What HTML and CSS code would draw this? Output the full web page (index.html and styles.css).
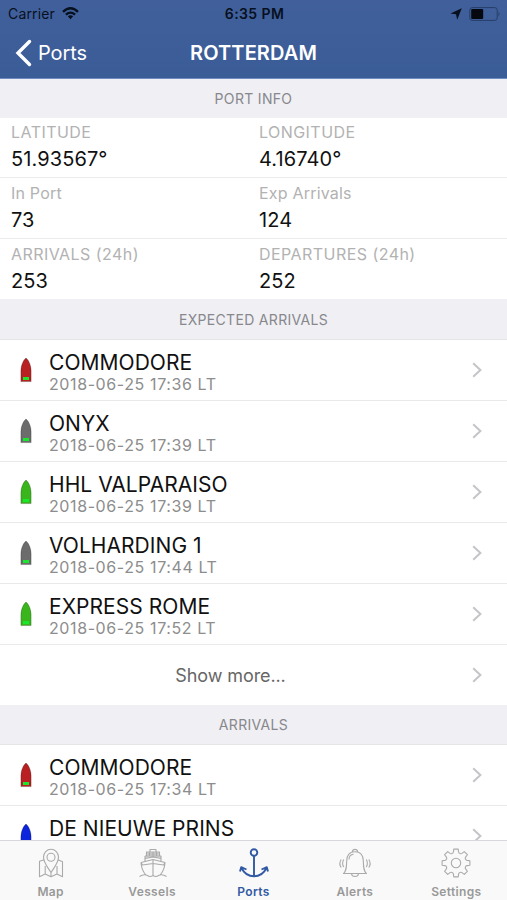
FILE: index.html
```html
<!DOCTYPE html>
<html lang="en">
<head>
<meta charset="utf-8">
<title>Rotterdam</title>
<link rel="stylesheet" href="styles.css">
</head>
<body>
<svg class="defs" aria-hidden="true">
  <defs>
    <symbol id="ship" viewBox="0 0 12 26">
      <path d="M.9 24.6V14C.9 8.500 3 3.500 6 1 9 3.500 11.100 8.500 11.100 14V24.600Z" fill="currentColor" stroke="#000" stroke-opacity=".28" stroke-width=".8"/>
      <rect x="3" y="20" width="6" height="3" fill="#18e72b"/>
    </symbol>
    <symbol id="chev" viewBox="0 0 10 16"><path d="M1.200 1.200 8.400 8 1.200 14.800" fill="none" stroke="#c5c5c9" stroke-width="2"/></symbol>
    <path id="tooth" d="M-3.900-9.400Q-2.800-9.900-2.600-11L-2.200-13.900H2.200L2.600-11Q2.800-9.900 3.900-9.400"/>
  </defs>
</svg>
<div class="screen">
  <header class="top">
    <div class="status">
      <div class="side"><span class="carrier">Carrier</span>
        <svg class="wifi" width="17" height="13" viewBox="0 0 17 13"><g fill="none" stroke="#07101f" stroke-width="2.300"><path d="M1 4.800Q8.500-2.200 16 4.800"/><path d="M3.900 7.700Q8.500 3.500 13.100 7.700"/></g><path d="M5.800 9.300Q8.500 7.200 11.200 9.300L8.500 12.200Z" fill="#07101f"/></svg>
      </div>
      <span class="clock">6:35 PM</span>
      <div class="side right">
        <svg width="12" height="12" viewBox="0 0 12 12"><path d="M11.800.2 7.200 11.800 6 6.300.4 5.500Z" fill="#07101f"/></svg>
        <svg class="battery" width="32" height="14" viewBox="0 0 32 14"><rect x=".8" y=".6" width="27.400" height="12.800" rx="2.500" fill="none" stroke="#263d68"/><rect x="2.200" y="2" width="12" height="10" rx="1" fill="#05080f"/><path d="M29.500 4.500Q31.500 7 29.500 9.500Z" fill="#263d68"/></svg>
      </div>
    </div>
    <nav class="nav">
      <div class="side"><svg width="17" height="28" viewBox="0 0 17 28"><path d="M14.500 2.500 3 14 14.500 25.500" fill="none" stroke="#fff" stroke-width="3.400" stroke-linecap="round" stroke-linejoin="miter"/></svg><span class="back">Ports</span></div>
      <h1>ROTTERDAM</h1>
      <div class="side"></div>
    </nav>
  </header>
  <main>
    <h2 class="first"><span>PORT INFO</span></h2>
    <div class="info">
      <div class="cell"><span class="label">LATITUDE</span><span class="value">51.93567°</span></div>
      <div class="cell"><span class="label">LONGITUDE</span><span class="value">4.16740°</span></div>
      <div class="cell"><span class="label mixed">In Port</span><span class="value">73</span></div>
      <div class="cell"><span class="label mixed">Exp Arrivals</span><span class="value">124</span></div>
      <div class="cell last"><span class="label">ARRIVALS (24h)</span><span class="value">253</span></div>
      <div class="cell last"><span class="label">DEPARTURES (24h)</span><span class="value">252</span></div>
    </div>
    <h2 class="expected"><span>EXPECTED ARRIVALS</span></h2>
    <div class="row"><svg class="ship red"><use href="#ship"/></svg><div class="text"><span class="name">COMMODORE</span><span class="time">2018-06-25 17:36 LT</span></div><svg class="chev"><use href="#chev"/></svg></div>
    <div class="row"><svg class="ship gray"><use href="#ship"/></svg><div class="text"><span class="name">ONYX</span><span class="time">2018-06-25 17:39 LT</span></div><svg class="chev"><use href="#chev"/></svg></div>
    <div class="row"><svg class="ship green"><use href="#ship"/></svg><div class="text"><span class="name">HHL VALPARAISO</span><span class="time">2018-06-25 17:39 LT</span></div><svg class="chev"><use href="#chev"/></svg></div>
    <div class="row"><svg class="ship gray"><use href="#ship"/></svg><div class="text"><span class="name">VOLHARDING 1</span><span class="time">2018-06-25 17:44 LT</span></div><svg class="chev"><use href="#chev"/></svg></div>
    <div class="row"><svg class="ship green"><use href="#ship"/></svg><div class="text"><span class="name">EXPRESS ROME</span><span class="time">2018-06-25 17:52 LT</span></div><svg class="chev"><use href="#chev"/></svg></div>
    <div class="row more"><span class="show">Show more...</span><svg class="chev"><use href="#chev"/></svg></div>
    <h2><span>ARRIVALS</span></h2>
    <div class="row"><svg class="ship red"><use href="#ship"/></svg><div class="text"><span class="name">COMMODORE</span><span class="time">2018-06-25 17:34 LT</span></div><svg class="chev"><use href="#chev"/></svg></div>
    <div class="row"><svg class="ship blue"><use href="#ship"/></svg><div class="text"><span class="name">DE NIEUWE PRINS</span></div><svg class="chev"><use href="#chev"/></svg></div>
  </main>
  <footer class="tabs">
    <div class="tab"><svg width="32" height="32" viewBox="-16 -16 32 32"><path d="M0 9.500C-3 4.500-7.500 0-7.500-6A7.500 7.700 0 0 1 7.500-6C7.500 0 3 4.500 0 9.500Z"/><circle cy="-5.800" r="4"/><path d="M-6.800-3.200-11.500-1.800V13.800L-5.800 11 0 13.800 6 11 11.500 13.800V-1.200L7-3.200M-5.800 3V11M0 9.500V13.800M6 3V11"/></svg><span>Map</span></div>
    <div class="tab"><svg width="32" height="32" viewBox="-17 -16 32 32"><path d="M-8-7H8V-4.500L0-6-8-4.500ZM-6.500-11H6.500V-7H-6.500Z" fill="#ddd" stroke="none"/><path d="M-3-11V-13.500H3V-11M-6.500-7V-11H6.500V-7M-8-7H8V-2M-8-7V-2M-5.500-9H5.500M-3.500-11V-7M0-11V-7M3.500-11V-7M-8-4.500 0-6 8-4.500M-12-.5 0-3.500 12-.5Q11.500 7 7.500 11.500M-12-.5Q-11.500 7-7.500 11.500M0-3.500V12.500M-12-.5-10.500 2 0 .5 10.500 2 12-.5M-13.500 13.500Q-9 10.500-5.500 12.500-3 14.500 0 12.500 3 14.500 5.500 12.500 9 10.500 13.500 13.500"/></svg><span>Vessels</span></div>
    <div class="tab active"><svg width="32" height="32" viewBox="-16 -16 32 32"><circle cy="-10.500" r="3.300"/><path d="M0-7.200V13M-12.500 5C-10 10-6 13.300 0 13.300S10 10 12.500 5M-14 8.500-12.800 4.200-7.500 6.500M14 8.500 12.800 4.200 7.500 6.500"/></svg><span>Ports</span></div>
    <div class="tab"><svg width="32" height="32" viewBox="-16 -16 32 32"><path d="M-11.500 10.500C-8.500 8-8.500 4-8.300-2-8.200-8-5-11.200 0-11.200S8.200-8 8.300-2C8.500 4 8.500 8 11.500 10.500ZM-2.500-11C-3-14.500 3-14.500 2.500-11M-3.500 10.700C-3 14.500 3 14.500 3.500 10.700M-6-3.500C-6-6.500-4-8.500-1.500-8.800M-11.300-3.500Q-13.500.5-11.300 4M11.300-3.500Q13.500.5 11.300 4M-13.800-3.500Q-16.500.5-13.800 4.500M13.800-3.500Q16.500.5 13.800 4.500"/></svg><span>Alerts</span></div>
    <div class="tab"><svg width="32" height="32" viewBox="-16 -16 32 32"><circle r="4.700"/><use href="#tooth"/><use href="#tooth" transform="rotate(45)"/><use href="#tooth" transform="rotate(90)"/><use href="#tooth" transform="rotate(135)"/><use href="#tooth" transform="rotate(180)"/><use href="#tooth" transform="rotate(225)"/><use href="#tooth" transform="rotate(270)"/><use href="#tooth" transform="rotate(315)"/></svg><span>Settings</span></div>
  </footer>
</div>
</body>
</html>
```

FILE: styles.css
```css
* { box-sizing: border-box; }
body { margin: 0; font-family: Inter, "Liberation Sans", sans-serif; background: #fff; }
.defs { display: block; width: 0; height: 0; }
.screen { display: flex; flex-direction: column; width: 507px; height: 900px; overflow: hidden; }
.top { height: 79px; flex: none; background: linear-gradient(#41609b, #3a5c97); border-bottom: 1px solid #6f8cc0; }
.status { display: flex; align-items: center; height: 27px; padding: 0 6px 0 8px; color: #07101f; font-size: 14px; }
.side { flex: 1; display: flex; align-items: center; }
.side.right { justify-content: flex-end; gap: 7px; }
.wifi { margin-left: 7px; }
.carrier { letter-spacing: .15px; }
.clock { font-weight: 600; font-size: 14px; letter-spacing: .4px; }
.nav { display: flex; align-items: center; height: 52px; padding: 0 0 1px 15px; color: #fff; }
.nav .side:last-child { margin-left: 15px; }
.back { margin-left: 6px; font-size: 20px; letter-spacing: -.1px; }
h1 { margin: 0; font-size: 20px; font-weight: 600; letter-spacing: .1px; }
main { flex: 1; min-height: 0; overflow: hidden; }
h2 { display: flex; align-items: center; justify-content: center; height: 40px; margin: 0; background: #efeff4; border-bottom: 1px solid #e5e5e8; font-size: 14px; font-weight: 400; letter-spacing: .32px; color: #88888c; }
h2.first { height: 39px; margin-bottom: -1px; border-bottom-color: #efeff4; }
h2.expected { height: 41px; padding-top: 1px; }
.info { display: grid; grid-template-columns: 248px 1fr; grid-auto-rows: 61px; height: 182px; }
.cell { display: flex; flex-direction: column; padding-left: 11px; border-bottom: 1px solid #ececef; }
.cell.last { border: 0; }
.label { margin-top: 4px; height: 22px; line-height: 22px; font-size: 16px; letter-spacing: .45px; color: #b2b2b2; }
.mixed { letter-spacing: .2px; }
.value { height: 30px; line-height: 32px; font-size: 20px; letter-spacing: .1px; color: #111; }
.row { display: flex; align-items: center; height: 61px; padding: 0 25px 0 20px; border-bottom: 1px solid #e9e9ec; }
.text { flex: 1; margin-left: 17px; align-self: flex-start; display: flex; flex-direction: column; padding-top: 8px; }
.name { height: 26px; line-height: 30px; font-size: 21px; letter-spacing: .05px; color: #111; white-space: nowrap; }
.time { height: 20px; line-height: 20px; font-size: 16px; letter-spacing: .6px; color: #8d8d8d; }
.ship { width: 12px; height: 26px; }
.red { color: #b82022; }
.gray { color: #6c6c6c; }
.green { color: #3ab51c; }
.blue { color: #0c24dc; }
.chev { width: 10px; height: 16px; }
.more { border: 0; height: 60px; }
.show { flex: 1; padding-right: 31px; text-align: center; font-size: 18px; letter-spacing: -.1px; color: #666; }
.tabs { display: flex; flex: none; height: 60px; background: #f9f9f9; border-top: 1px solid #d8d8dc; }
.tab { flex: 1; display: flex; flex-direction: column; align-items: center; padding-top: 6px; color: #999; font-size: 12px; font-weight: 600; letter-spacing: .35px; }
.tab svg { display: block; fill: none; stroke: #aaa; stroke-width: 1.100; stroke-linejoin: round; overflow: visible; }
.tab span { line-height: 16px; margin-top: 5px; }
.active { color: #3159a4; }
.active svg { stroke: #3159a4; stroke-width: 1.900; }
```
